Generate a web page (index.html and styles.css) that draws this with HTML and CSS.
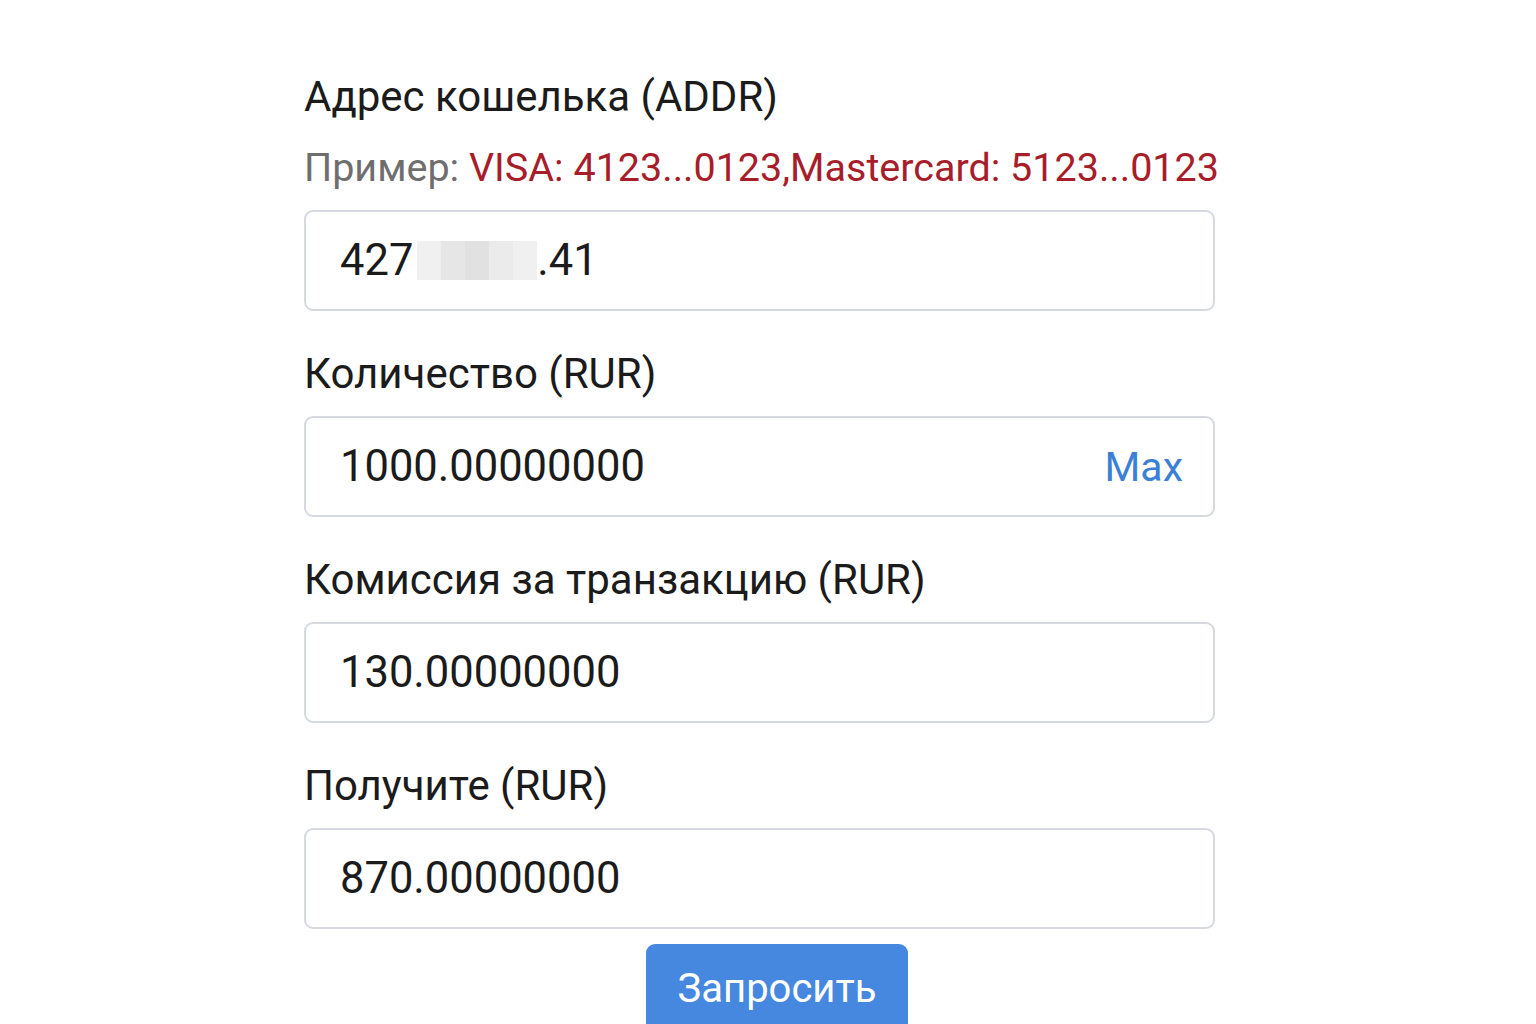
FILE: index.html
```html
<!DOCTYPE html>
<html lang="ru">
<head>
    <meta charset="UTF-8">
    <meta name="viewport" content="width=device-width, initial-scale=1.0">
    <title>Вывод</title>
    <link rel="stylesheet" href="styles.css">
</head>
<body>
    <form class="withdraw-form">
        <div class="form-group">
            <label for="addr">Адрес кошелька (ADDR)</label>
            <p class="hint">Пример: <span class="hint-value">VISA: 4123...0123,Mastercard: 5123...0123</span></p>
            <div class="field">
                <span class="value">427<span class="blur"><span class="px px-a"></span><span class="px px-b"></span><span class="px px-c"></span><span class="px px-d"></span><span class="px px-a"></span></span>.41</span>
            </div>
        </div>
        <div class="form-group">
            <label for="amount">Количество (RUR)</label>
            <div class="field">
                <span class="value">1000.00000000</span>
                <a class="max-link" href="#">Max</a>
            </div>
        </div>
        <div class="form-group">
            <label for="fee">Комиссия за транзакцию (RUR)</label>
            <div class="field">
                <span class="value">130.00000000</span>
            </div>
        </div>
        <div class="form-group">
            <label for="receive">Получите (RUR)</label>
            <div class="field">
                <span class="value">870.00000000</span>
            </div>
        </div>
        <div class="actions">
            <button type="button" class="submit-button">Запросить</button>
        </div>
    </form>
</body>
</html>
```

FILE: styles.css
```css
html, body {
    height: 100%;
}
body {
    font-family: Roboto, "Noto Sans", sans-serif;
    background-color: #fff;
    color: #1b1b1b;
    margin: 0;
    padding-right: 17px;
    overflow: hidden;
}
.withdraw-form {
    width: 911px;
    margin: 0 auto;
    padding-top: 71px;
}
.form-group {
    margin-bottom: 37px;
}
.form-group label {
    display: block;
    font-size: 42px;
    line-height: 52px;
    margin-bottom: 16px;
}
.hint {
    margin: 20px 0 17px;
    font-size: 39.5px;
    line-height: 50px;
    white-space: nowrap;
    color: #6e6e6e;
}
.hint-value {
    color: #a71d2a;
}
.field {
    display: flex;
    align-items: center;
    justify-content: space-between;
    height: 97px;
    padding: 0 30px 0 34px;
    border: 2px solid #d6dae0;
    border-radius: 9px;
    font-size: 43.5px;
}
.value {
    display: flex;
    align-items: center;
}
.blur {
    display: inline-flex;
    margin-left: 4px;
    height: 39px;
}
.px {
    width: 24px;
    height: 39px;
}
.px-a { background-color: #f0f0f0; }
.px-b { background-color: #e6e6e6; }
.px-c { background-color: #e1e1e1; }
.px-d { background-color: #ebebeb; }
.max-link {
    color: #3b7fd6;
    font-size: 41px;
    text-decoration: none;
}
.actions {
    display: flex;
    justify-content: center;
    margin-top: -22px;
    padding-left: 35px;
}
.submit-button {
    width: 262px;
    height: 92px;
    padding-bottom: 4px;
    background-color: #4688e0;
    color: #fff;
    font-family: inherit;
    font-size: 40px;
    border: none;
    border-radius: 9px;
    cursor: pointer;
}
```
